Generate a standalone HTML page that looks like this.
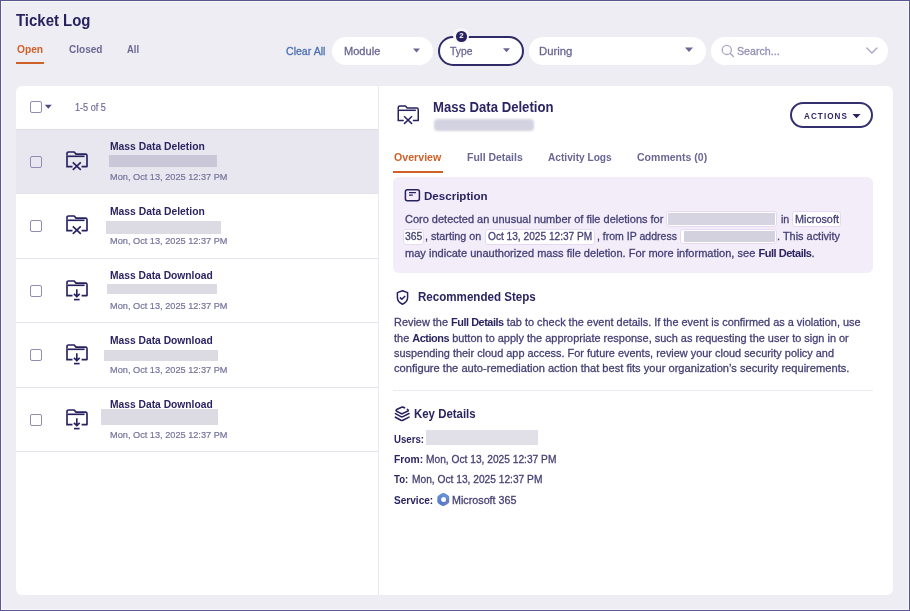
<!DOCTYPE html>
<html><head><meta charset="utf-8"><title>Ticket Log</title>
<style>
html,body{margin:0;padding:0;width:910px;height:611px;overflow:hidden;background:#eeedf3}
body{font-family:"Liberation Sans",sans-serif;position:relative}
.frame{position:absolute;left:0;top:0;width:910px;height:611px;box-sizing:border-box;border:1px solid #5a568f}
.frame2{position:absolute;left:1px;top:1px;width:908px;height:609px;box-sizing:border-box;border:1px solid #f7f7fa}
.r{position:absolute;display:block}
.t{position:absolute;white-space:nowrap;transform-origin:0 50%;}
.t.n{-webkit-text-stroke:0.3px currentColor}
.t.n b{-webkit-text-stroke:0;letter-spacing:-0.5px}
.t b{font-weight:700}
.pill{background:#fff;border-radius:14px}
.cb{width:12px;height:12px;box-sizing:border-box;border:1.4px solid #8f8db2;border-radius:2px;background:transparent}
.red{}
</style></head><body>
<div class="r" style="left:15.5px;top:62px;width:28px;height:2px;background:#cf6128"></div>
<div class="r pill" style="left:332px;top:37px;width:101px;height:28px"></div>
<svg class="r" style="left:412px;top:47px" width="9" height="7"><path d="M1 1.4h7l-3.5 4z" fill="#6a6795"/></svg>
<div class="r" style="left:437.5px;top:36px;width:86.5px;height:29.5px;border:2px solid #2f2b6a;border-radius:15px;background:#fff;box-sizing:border-box"></div>
<svg class="r" style="left:502px;top:47px" width="9" height="7"><path d="M1 1.2h7l-3.5 4z" fill="#6a6795"/></svg>
<div class="r" style="left:453.3px;top:28.3px;width:16px;height:16px;border-radius:50%;background:#f7f7fa"></div>
<div class="r" style="left:456px;top:31px;width:10.6px;height:10.6px;border-radius:50%;background:#27225f;color:#fff;font:700 7.6px/10.6px 'Liberation Sans',sans-serif;text-align:center">2</div>
<div class="r pill" style="left:529px;top:37px;width:177px;height:28px"></div>
<svg class="r" style="left:684px;top:46px" width="10" height="8"><path d="M1 1.4h8l-4 4.6z" fill="#6a6795"/></svg>
<div class="r pill" style="left:711px;top:37px;width:177px;height:28px"></div>
<svg class="r" style="left:720px;top:43px" width="16" height="16"><circle cx="6.8" cy="6.9" r="4.6" fill="none" stroke="#aaa8c6" stroke-width="1.3"/><path d="M10.2 10.3l3.2 3.2" stroke="#aaa8c6" stroke-width="1.4" stroke-linecap="round"/></svg>
<svg class="r" style="left:865px;top:46px" width="14" height="9"><path d="M1.8 2l5.1 5 5.1-5" fill="none" stroke="#aaa8c6" stroke-width="1.4" stroke-linecap="round"/></svg>
<div class="r" style="left:16px;top:86px;width:877px;height:509px;background:#fff;border-radius:6px"></div>
<div class="r" style="left:378px;top:86px;width:1.2px;height:509px;background:#ebeaf0"></div>
<div class="r cb" style="left:30px;top:101px"></div>
<svg class="r" style="left:44px;top:104px" width="9" height="6"><path d="M0.8 0.8h7l-3.5 4z" fill="#4f4c82"/></svg>
<div class="r" style="left:16px;top:129.0px;width:362px;height:64.5px;background:#e8e7ef"></div>
<div class="r" style="left:16px;top:129.0px;width:362px;height:1px;background:#dfdee7"></div>
<div class="r" style="left:16px;top:193.0px;width:362px;height:1px;background:#e5e4eb"></div>
<div class="r cb" style="left:30px;top:155.5px"></div>
<svg class="r" style="left:65.5px;top:150.5px" width="22" height="20" viewBox="0 0 22 20"><path d="M1 4.8V2.6Q1 1 2.6 1H8.2L10 3.1H19.4Q21 3.1 21 4.7V15.6H15.6" fill="none" stroke="#27225f" stroke-width="1.65" stroke-linejoin="round"/><path d="M6.5 15.6H1V4.8" fill="none" stroke="#27225f" stroke-width="1.65"/><path d="M1.6 5.3H18.6" stroke="#27225f" stroke-width="1.65"/><path d="M6.8 11.3l8 7.6M14.8 11.3l-8 7.6" stroke="#27225f" stroke-width="1.65"/></svg>
<div class="r red" style="left:108.5px;top:155.0px;width:108.5px;height:12px;background:#c9c7d8;"></div>
<div class="r" style="left:16px;top:257.5px;width:362px;height:1px;background:#e5e4eb"></div>
<div class="r cb" style="left:30px;top:220.0px"></div>
<svg class="r" style="left:65.5px;top:215.0px" width="22" height="20" viewBox="0 0 22 20"><path d="M1 4.8V2.6Q1 1 2.6 1H8.2L10 3.1H19.4Q21 3.1 21 4.7V15.6H15.6" fill="none" stroke="#27225f" stroke-width="1.65" stroke-linejoin="round"/><path d="M6.5 15.6H1V4.8" fill="none" stroke="#27225f" stroke-width="1.65"/><path d="M1.6 5.3H18.6" stroke="#27225f" stroke-width="1.65"/><path d="M6.8 11.3l8 7.6M14.8 11.3l-8 7.6" stroke="#27225f" stroke-width="1.65"/></svg>
<div class="r red" style="left:105.8px;top:221.0px;width:115.2px;height:12.5px;background:#dcdbe4;filter:blur(0.7px);"></div>
<div class="r" style="left:16px;top:322.0px;width:362px;height:1px;background:#e5e4eb"></div>
<div class="r cb" style="left:30px;top:284.5px"></div>
<svg class="r" style="left:65.5px;top:279.5px" width="22" height="21" viewBox="0 0 22 21"><path d="M1 4.8V2.6Q1 1 2.6 1H8.2L10 3.1H19.4Q21 3.1 21 4.7V15.6H15.6" fill="none" stroke="#27225f" stroke-width="1.65" stroke-linejoin="round"/><path d="M6.5 15.6H1V4.8" fill="none" stroke="#27225f" stroke-width="1.65"/><path d="M1.6 5.3H18.6" stroke="#27225f" stroke-width="1.65"/><path d="M10.8 9.2V16.6M7.9 13.8l2.9 2.9 2.9-2.9" fill="none" stroke="#27225f" stroke-width="1.65"/><path d="M8 19.6H13.6" stroke="#27225f" stroke-width="1.65"/></svg>
<div class="r red" style="left:106.6px;top:283.8px;width:110.4px;height:10.7px;background:#dcdbe4;filter:blur(0.7px);"></div>
<div class="r" style="left:16px;top:386.5px;width:362px;height:1px;background:#e5e4eb"></div>
<div class="r cb" style="left:30px;top:349.0px"></div>
<svg class="r" style="left:65.5px;top:344.0px" width="22" height="21" viewBox="0 0 22 21"><path d="M1 4.8V2.6Q1 1 2.6 1H8.2L10 3.1H19.4Q21 3.1 21 4.7V15.6H15.6" fill="none" stroke="#27225f" stroke-width="1.65" stroke-linejoin="round"/><path d="M6.5 15.6H1V4.8" fill="none" stroke="#27225f" stroke-width="1.65"/><path d="M1.6 5.3H18.6" stroke="#27225f" stroke-width="1.65"/><path d="M10.8 9.2V16.6M7.9 13.8l2.9 2.9 2.9-2.9" fill="none" stroke="#27225f" stroke-width="1.65"/><path d="M8 19.6H13.6" stroke="#27225f" stroke-width="1.65"/></svg>
<div class="r red" style="left:104.2px;top:349.8px;width:113.39999999999999px;height:11.2px;background:#dcdbe4;filter:blur(0.7px);"></div>
<div class="r" style="left:16px;top:451.0px;width:362px;height:1px;background:#e5e4eb"></div>
<div class="r cb" style="left:30px;top:413.5px"></div>
<svg class="r" style="left:65.5px;top:408.5px" width="22" height="21" viewBox="0 0 22 21"><path d="M1 4.8V2.6Q1 1 2.6 1H8.2L10 3.1H19.4Q21 3.1 21 4.7V15.6H15.6" fill="none" stroke="#27225f" stroke-width="1.65" stroke-linejoin="round"/><path d="M6.5 15.6H1V4.8" fill="none" stroke="#27225f" stroke-width="1.65"/><path d="M1.6 5.3H18.6" stroke="#27225f" stroke-width="1.65"/><path d="M10.8 9.2V16.6M7.9 13.8l2.9 2.9 2.9-2.9" fill="none" stroke="#27225f" stroke-width="1.65"/><path d="M8 19.6H13.6" stroke="#27225f" stroke-width="1.65"/></svg>
<div class="r red" style="left:101px;top:409.4px;width:116.6px;height:16.0px;background:#dcdbe4;filter:blur(0.7px);"></div>
<svg class="r" style="left:396.5px;top:104.5px" width="22.5" height="20" viewBox="0 0 22 20"><path d="M1 4.8V2.6Q1 1 2.6 1H8.2L10 3.1H19.4Q21 3.1 21 4.7V15.6H15.6" fill="none" stroke="#27225f" stroke-width="1.5" stroke-linejoin="round"/><path d="M6.5 15.6H1V4.8" fill="none" stroke="#27225f" stroke-width="1.5"/><path d="M1.6 5.3H18.6" stroke="#27225f" stroke-width="1.5"/><path d="M6.8 11.3l8 7.6M14.8 11.3l-8 7.6" stroke="#27225f" stroke-width="1.5"/></svg>
<div class="r red" style="left:434px;top:119px;width:100px;height:11.5px;background:#d3d2e0;border-radius:4px;filter:blur(0.8px)"></div>
<div class="r" style="left:790px;top:102.3px;width:83px;height:25.3px;border:2px solid #34306e;border-radius:13px;box-sizing:border-box"></div>
<svg class="r" style="left:852px;top:113px" width="9" height="6"><path d="M0.5 1h8l-4 4.2z" fill="#27225f"/></svg>
<div class="r" style="left:393.4px;top:171px;width:49.5px;height:2px;background:#cf6128"></div>
<div class="r" style="left:393px;top:177px;width:480px;height:95.5px;background:#f3ecf9;border-radius:6px"></div>
<svg class="r" style="left:404px;top:188px" width="18" height="15"><rect x="1.4" y="1.7" width="14" height="11.1" rx="2" fill="none" stroke="#27225f" stroke-width="1.5"/><path d="M5 4.6h6.9M5 7.1h3.8" stroke="#27225f" stroke-width="1.4"/></svg>
<div class="r" style="left:666.1px;top:211px;width:110.5px;height:16px;background:#fff;border:1px solid #e6d9f0;border-radius:3px;box-sizing:border-box"></div>
<div class="r red" style="left:668px;top:213px;width:107px;height:12px;background:#d6d4e0"></div>
<div class="r" style="left:791.9px;top:211px;width:49.10000000000002px;height:15.5px;background:#fff;border:1px solid #e6d9f0;border-radius:3px;box-sizing:border-box"></div>
<div class="r" style="left:403.2px;top:229px;width:21.100000000000023px;height:15.599999999999994px;background:#fff;border:1px solid #e6d9f0;border-radius:3px;box-sizing:border-box"></div>
<div class="r" style="left:485.3px;top:229px;width:109.90000000000003px;height:15.599999999999994px;background:#fff;border:1px solid #e6d9f0;border-radius:3px;box-sizing:border-box"></div>
<div class="r" style="left:680.4px;top:228.7px;width:96.20000000000005px;height:15.600000000000023px;background:#fff;border:1px solid #e6d9f0;border-radius:3px;box-sizing:border-box"></div>
<div class="r red" style="left:684px;top:231px;width:90.5px;height:11px;background:#d3d1de"></div>
<svg class="r" style="left:395px;top:288.5px" width="15" height="17"><path d="M7.5 1.8L12.6 3.6V8.6C12.6 11.8 10.4 14 7.5 15.2C4.6 14 2.4 11.8 2.4 8.6V3.6Z" fill="none" stroke="#27225f" stroke-width="1.5" stroke-linejoin="round"/><path d="M4.9 8.4l1.9 1.9 3.4-3.3" fill="none" stroke="#27225f" stroke-width="1.5"/></svg>
<div class="r" style="left:393px;top:389.5px;width:480px;height:1px;background:#ecebf1"></div>
<svg class="r" style="left:393px;top:405px" width="18" height="18"><path d="M11.6 2.8Q10.2 1.7 8.6 2.3L3.6 4.6Q2.4 5.3 3.6 6.2L7.8 8.4Q8.9 8.9 10 8.4L14.9 6Q15.9 5.3 14.4 4.4" fill="none" stroke="#27225f" stroke-width="1.6" stroke-linecap="round" stroke-linejoin="round"/><path d="M2.4 8.6L7.9 11.6Q8.9 12.1 9.9 11.6L16 8.5M2.4 12.2L7.9 15.3Q8.9 15.8 9.9 15.3L16 12.1" fill="none" stroke="#27225f" stroke-width="1.6" stroke-linecap="round" stroke-linejoin="round"/></svg>
<div class="r red" style="left:426.4px;top:430px;width:111.6px;height:14.5px;background:#e1e0e8;filter:blur(0.5px)"></div>
<svg class="r" style="left:435.5px;top:492px" width="15" height="15" viewBox="0 0 15 15"><defs><linearGradient id="msg" x1="0" y1="0" x2="1" y2="1"><stop offset="0" stop-color="#6b96e0"/><stop offset="0.55" stop-color="#5079cc"/><stop offset="1" stop-color="#8a84b8"/></linearGradient></defs><path d="M7.3 0.9C8.2 0.9 12.6 3.4 13 4.2C13.4 5 13.4 10 13 10.8C12.6 11.6 8.2 14.1 7.3 14.1C6.4 14.1 2 11.6 1.6 10.8C1.2 10 1.2 5 1.6 4.2C2 3.4 6.4 0.9 7.3 0.9Z" fill="url(#msg)"/><path d="M5 3.2L12.6 7.4L13 4.2C12.6 3.4 8.2 0.9 7.3 0.9C6.6 0.9 5.6 1.6 5 3.2Z" fill="#6c97de" opacity="0.7"/><circle cx="7.6" cy="7.5" r="2.5" fill="#fff"/></svg>
<span id="t0" class="t" style="left:16.1px;top:10.00px;font-size:17px;line-height:22px;font-weight:700;color:#27225f;transform:scaleX(0.8795);">Ticket Log</span>
<span id="t1" class="t" style="left:16.9px;top:42.00px;font-size:11.2px;line-height:15px;font-weight:700;color:#cf6128;transform:scaleX(0.9128);">Open</span>
<span id="t2" class="t" style="left:68.5px;top:42.00px;font-size:11.2px;line-height:15px;font-weight:700;color:#6a6795;transform:scaleX(0.8978);">Closed</span>
<span id="t3" class="t" style="left:127px;top:42.00px;font-size:11.2px;line-height:15px;font-weight:700;color:#6a6795;transform:scaleX(0.8393);">All</span>
<span id="t4" class="t n" style="left:286px;top:44.00px;font-size:11.4px;line-height:15px;font-weight:400;color:#4a6fb1;transform:scaleX(0.9288);">Clear All</span>
<span id="t5" class="t n" style="left:343.6px;top:44.00px;font-size:11.2px;line-height:15px;font-weight:400;color:#6a6795;transform:scaleX(0.9890);">Module</span>
<span id="t6" class="t n" style="left:449.8px;top:44.00px;font-size:11.2px;line-height:15px;font-weight:400;color:#6a6795;transform:scaleX(0.9231);">Type</span>
<span id="t7" class="t n" style="left:539.3px;top:44.00px;font-size:11.2px;line-height:15px;font-weight:400;color:#6a6795;transform:scaleX(1.0131);">During</span>
<span id="t8" class="t n" style="left:737px;top:44.00px;font-size:11.2px;line-height:15px;font-weight:400;color:#9290b5;transform:scaleX(0.9535);">Search...</span>
<span id="t9" class="t n" style="left:74.6px;top:101.00px;font-size:10px;line-height:13px;font-weight:400;color:#6a6795;transform:scaleX(0.9109);-webkit-text-stroke:0.15px currentColor;">1-5 of 5</span>
<span id="t10" class="t" style="left:109.5px;top:138.00px;font-size:11.6px;line-height:15px;font-weight:700;color:#2a2562;transform:scaleX(0.8917);">Mass Data Deletion</span>
<span id="t11" class="t n" style="left:109.5px;top:171.00px;font-size:9.6px;line-height:12px;font-weight:400;color:#75739c;transform:scaleX(0.9578);-webkit-text-stroke:0.2px currentColor;">Mon, Oct 13, 2025 12:37 PM</span>
<span id="t12" class="t" style="left:109.5px;top:203.00px;font-size:11.6px;line-height:15px;font-weight:700;color:#2a2562;transform:scaleX(0.8917);">Mass Data Deletion</span>
<span id="t13" class="t n" style="left:109.5px;top:235.00px;font-size:9.6px;line-height:12px;font-weight:400;color:#75739c;transform:scaleX(0.9578);-webkit-text-stroke:0.2px currentColor;">Mon, Oct 13, 2025 12:37 PM</span>
<span id="t14" class="t" style="left:109.5px;top:267.00px;font-size:11.6px;line-height:15px;font-weight:700;color:#2a2562;transform:scaleX(0.8856);">Mass Data Download</span>
<span id="t15" class="t n" style="left:109.5px;top:300.00px;font-size:9.6px;line-height:12px;font-weight:400;color:#75739c;transform:scaleX(0.9578);-webkit-text-stroke:0.2px currentColor;">Mon, Oct 13, 2025 12:37 PM</span>
<span id="t16" class="t" style="left:109.5px;top:332.00px;font-size:11.6px;line-height:15px;font-weight:700;color:#2a2562;transform:scaleX(0.8856);">Mass Data Download</span>
<span id="t17" class="t n" style="left:109.5px;top:364.00px;font-size:9.6px;line-height:12px;font-weight:400;color:#75739c;transform:scaleX(0.9578);-webkit-text-stroke:0.2px currentColor;">Mon, Oct 13, 2025 12:37 PM</span>
<span id="t18" class="t" style="left:109.5px;top:396.00px;font-size:11.6px;line-height:15px;font-weight:700;color:#2a2562;transform:scaleX(0.8856);">Mass Data Download</span>
<span id="t19" class="t n" style="left:109.5px;top:429.00px;font-size:9.6px;line-height:12px;font-weight:400;color:#75739c;transform:scaleX(0.9578);-webkit-text-stroke:0.2px currentColor;">Mon, Oct 13, 2025 12:37 PM</span>
<span id="t20" class="t" style="left:432.5px;top:98.00px;font-size:14px;line-height:18px;font-weight:700;color:#2a2562;transform:scaleX(0.9387);">Mass Data Deletion</span>
<span id="t21" class="t" style="left:804px;top:109.00px;font-size:9.8px;line-height:13px;font-weight:700;color:#2d2968;transform:scaleX(0.8273);letter-spacing:1.3px;">ACTIONS</span>
<span id="t22" class="t" style="left:394.3px;top:150.00px;font-size:10.8px;line-height:14px;font-weight:700;color:#cf6128;transform:scaleX(0.9848);">Overview</span>
<span id="t23" class="t" style="left:467.2px;top:150.00px;font-size:10.8px;line-height:14px;font-weight:700;color:#6a6795;transform:scaleX(0.9669);">Full Details</span>
<span id="t24" class="t" style="left:547.5px;top:150.00px;font-size:10.8px;line-height:14px;font-weight:700;color:#6a6795;transform:scaleX(0.9396);">Activity Logs</span>
<span id="t25" class="t" style="left:636.9px;top:150.00px;font-size:10.8px;line-height:14px;font-weight:700;color:#6a6795;transform:scaleX(0.9750);">Comments (0)</span>
<span id="t26" class="t" style="left:424.3px;top:189.00px;font-size:11.8px;line-height:15px;font-weight:700;color:#2a2562;transform:scaleX(0.9799);">Description</span>
<span id="t27" class="t n" style="left:404.9px;top:212.00px;font-size:11.3px;line-height:15px;font-weight:400;color:#433f75;transform:scaleX(0.9727);">Coro detected an unusual number of file deletions for</span>
<span id="t28" class="t n" style="left:780.6px;top:212.00px;font-size:11.3px;line-height:15px;font-weight:400;color:#433f75;transform:scaleX(0.9435);">in</span>
<span id="t29" class="t n" style="left:794.8px;top:212.00px;font-size:11.3px;line-height:15px;font-weight:400;color:#433f75;transform:scaleX(0.9579);">Microsoft</span>
<span id="t30" class="t n" style="left:404.9px;top:229.00px;font-size:11.3px;line-height:15px;font-weight:400;color:#433f75;transform:scaleX(0.9173);">365</span>
<span id="t31" class="t n" style="left:425.2px;top:229.00px;font-size:11.3px;line-height:15px;font-weight:400;color:#433f75;transform:scaleX(0.9537);">, starting on</span>
<span id="t32" class="t n" style="left:488.1px;top:229.00px;font-size:11.3px;line-height:15px;font-weight:400;color:#433f75;transform:scaleX(0.8977);">Oct 13, 2025 12:37 PM</span>
<span id="t33" class="t n" style="left:596.9px;top:229.00px;font-size:11.3px;line-height:15px;font-weight:400;color:#433f75;transform:scaleX(0.9311);">, from IP address</span>
<span id="t34" class="t n" style="left:777px;top:229.00px;font-size:11.3px;line-height:15px;font-weight:400;color:#433f75;transform:scaleX(0.9678);">. This activity</span>
<span id="t35" class="t n" style="left:405px;top:246.00px;font-size:11.3px;line-height:15px;font-weight:400;color:#433f75;transform:scaleX(0.9788);">may indicate unauthorized mass file deletion. For more information, see <b style="color:#2a2562">Full Details</b>.</span>
<span id="t36" class="t" style="left:417.8px;top:289.00px;font-size:12px;line-height:16px;font-weight:700;color:#2a2562;transform:scaleX(0.9652);">Recommended Steps</span>
<span id="t37" class="t n" style="left:394.1px;top:314.00px;font-size:11.6px;line-height:15px;font-weight:400;color:#433f75;transform:scaleX(0.9419);">Review the <b style="color:#2a2562">Full Details</b> tab to check the event details. If the event is confirmed as a violation, use</span>
<span id="t38" class="t n" style="left:394.1px;top:330.00px;font-size:11.6px;line-height:15px;font-weight:400;color:#433f75;transform:scaleX(0.9439);">the <b style="color:#2a2562">Actions</b> button to apply the appropriate response, such as requesting the user to sign in or</span>
<span id="t39" class="t n" style="left:394.1px;top:345.00px;font-size:11.6px;line-height:15px;font-weight:400;color:#433f75;transform:scaleX(0.9417);">suspending their cloud app access. For future events, review your cloud security policy and</span>
<span id="t40" class="t n" style="left:394.1px;top:360.00px;font-size:11.6px;line-height:15px;font-weight:400;color:#433f75;transform:scaleX(0.9592);">configure the auto-remediation action that best fits your organization’s security requirements.</span>
<span id="t41" class="t" style="left:414.3px;top:406.00px;font-size:12px;line-height:16px;font-weight:700;color:#2a2562;transform:scaleX(0.9520);">Key Details</span>
<span id="t42" class="t" style="left:394.1px;top:432.00px;font-size:11.4px;line-height:15px;font-weight:700;color:#2a2562;transform:scaleX(0.8486);">Users:</span>
<span id="t43" class="t" style="left:394.1px;top:452.00px;font-size:11.4px;line-height:15px;font-weight:700;color:#2a2562;transform:scaleX(0.9045);">From:</span>
<span id="t44" class="t n" style="left:425.9px;top:452.00px;font-size:11.4px;line-height:15px;font-weight:400;color:#433f75;transform:scaleX(0.8954);">Mon, Oct 13, 2025 12:37 PM</span>
<span id="t45" class="t" style="left:394.1px;top:472.00px;font-size:11.4px;line-height:15px;font-weight:700;color:#2a2562;transform:scaleX(0.8415);">To:</span>
<span id="t46" class="t n" style="left:411.9px;top:472.00px;font-size:11.4px;line-height:15px;font-weight:400;color:#433f75;transform:scaleX(0.8954);">Mon, Oct 13, 2025 12:37 PM</span>
<span id="t47" class="t" style="left:394.1px;top:493.00px;font-size:11.4px;line-height:15px;font-weight:700;color:#2a2562;transform:scaleX(0.8843);">Service:</span>
<span id="t48" class="t n" style="left:452.2px;top:493.00px;font-size:11.4px;line-height:15px;font-weight:400;color:#433f75;transform:scaleX(0.9433);">Microsoft 365</span>
<div class="frame"></div><div class="frame2"></div>
</body></html>
